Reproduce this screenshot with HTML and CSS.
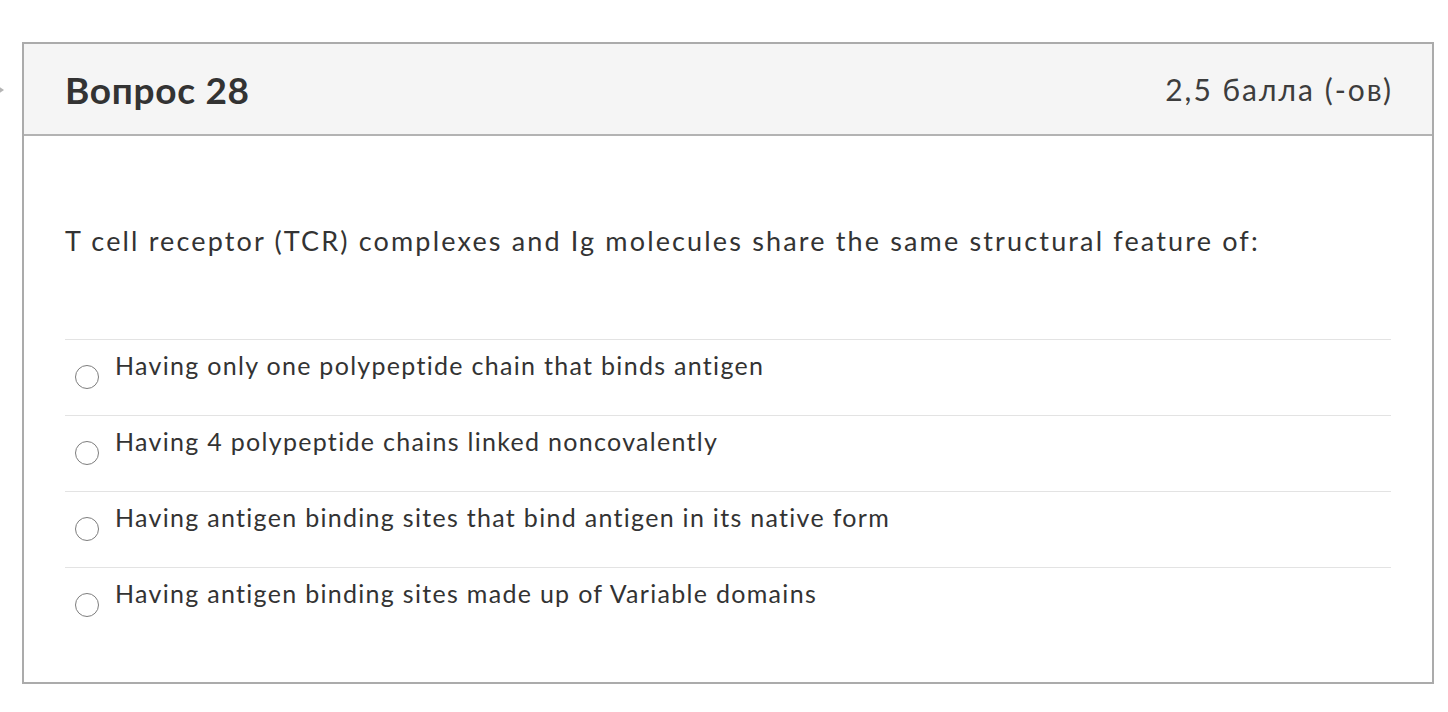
FILE: index.html
```html
<!DOCTYPE html>
<html lang="ru">
<head>
<meta charset="utf-8">
<title>Вопрос 28</title>
<link rel="stylesheet" href="styles.css">
</head>
<body>
<span class="pointer"></span>
<div class="card">
  <div class="card-header">
    <h2 class="title">Вопрос 28</h2>
    <span class="points">2,5 балла (-ов)</span>
  </div>
  <div class="card-body">
    <p class="question">T cell receptor (TCR) complexes and Ig molecules share the same structural feature of:</p>
    <div class="answers">
      <label class="answer"><span class="radio"></span><span class="answer-text">Having only one polypeptide chain that binds antigen</span></label>
      <label class="answer"><span class="radio"></span><span class="answer-text">Having 4 polypeptide chains linked noncovalently</span></label>
      <label class="answer"><span class="radio"></span><span class="answer-text">Having antigen binding sites that bind antigen in its native form</span></label>
      <label class="answer"><span class="radio"></span><span class="answer-text">Having antigen binding sites made up of Variable domains</span></label>
    </div>
  </div>
</div>
</body>
</html>
```

FILE: styles.css
```css
html, body {
  margin: 0;
  padding: 0;
  background: #ffffff;
}

body {
  font-family: Lato, "Open Sans", sans-serif;
  color: #333333;
  position: relative;
  padding-top: 42px;
  padding-left: 22px;
}

.pointer {
  position: absolute;
  left: -5px;
  top: 84px;
  width: 0;
  height: 0;
  border-top: 6px solid transparent;
  border-bottom: 6px solid transparent;
  border-left: 9px solid #b5b5b5;
}

.card {
  width: 1412px;
  box-sizing: border-box;
  border: 2px solid #ababab;
}

.card-header {
  display: flex;
  align-items: center;
  justify-content: space-between;
  height: 90px;
  padding: 0 41px;
  background: #f5f5f5;
  border-bottom: 2px solid #b3b3b3;
}

.title {
  margin: 0;
  font-size: 37px;
  font-weight: 700;
  color: #333333;
  letter-spacing: 0.7px;
}

.points {
  font-size: 30px;
  color: #3d3d3d;
  letter-spacing: 2px;
  margin-right: -2px;
}

.card-body {
  padding: 87px 41px 39px;
}

.question {
  margin: 0 0 80px;
  font-size: 27px;
  line-height: 36px;
  letter-spacing: 2.15px;
  color: #333333;
}

.answer {
  display: flex;
  align-items: flex-start;
  height: 76px;
  box-sizing: border-box;
  border-top: 1px solid #e3e3e3;
  padding-top: 5px;
}

.radio {
  flex: none;
  width: 24px;
  height: 24px;
  box-sizing: border-box;
  border: 1.5px solid #7d7d7d;
  border-radius: 50%;
  margin: 20px 16px 0 10px;
  background: #ffffff;
}

.answer-text {
  font-size: 25px;
  line-height: 40px;
  letter-spacing: 1.3px;
  color: #333333;
}
```
